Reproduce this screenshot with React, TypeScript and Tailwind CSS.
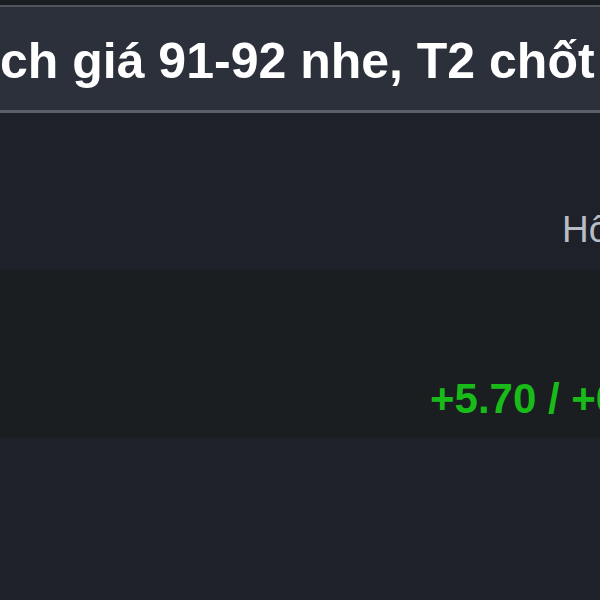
export default function App() {
  return (
    <div className="w-[600px] h-[600px] overflow-hidden bg-[#1e212a] flex flex-col" style={{ fontFamily: '"Liberation Sans", Arial, sans-serif' }}>
      <div className="h-[5px] bg-[#1a1d22] shrink-0" />
      <div className="h-[2px] bg-[#50545c] shrink-0" />
      <div className="h-[103px] bg-[#2c303a] shrink-0 overflow-hidden pt-[29px]">
        <div className="whitespace-nowrap text-white font-bold text-[50px] leading-none">ch giá 91-92 nhe, T2 chốt lời</div>
      </div>
      <div className="h-[3px] bg-[#5a5e66] shrink-0" />
      <div className="h-[157px] shrink-0 overflow-hidden pt-[98px] pl-[562px]">
        <div className="whitespace-nowrap text-[#b8bcc4] text-[37px] leading-none">Hôm nay</div>
      </div>
      <div className="h-[168px] bg-[#1a1e21] shrink-0 overflow-hidden pt-[108px] pl-[430px]">
        <div className="whitespace-nowrap text-[#19bb19] font-bold text-[42px] leading-none">+5.70 / +0.06%</div>
      </div>
      <div className="flex-1" />
    </div>
  );
}
